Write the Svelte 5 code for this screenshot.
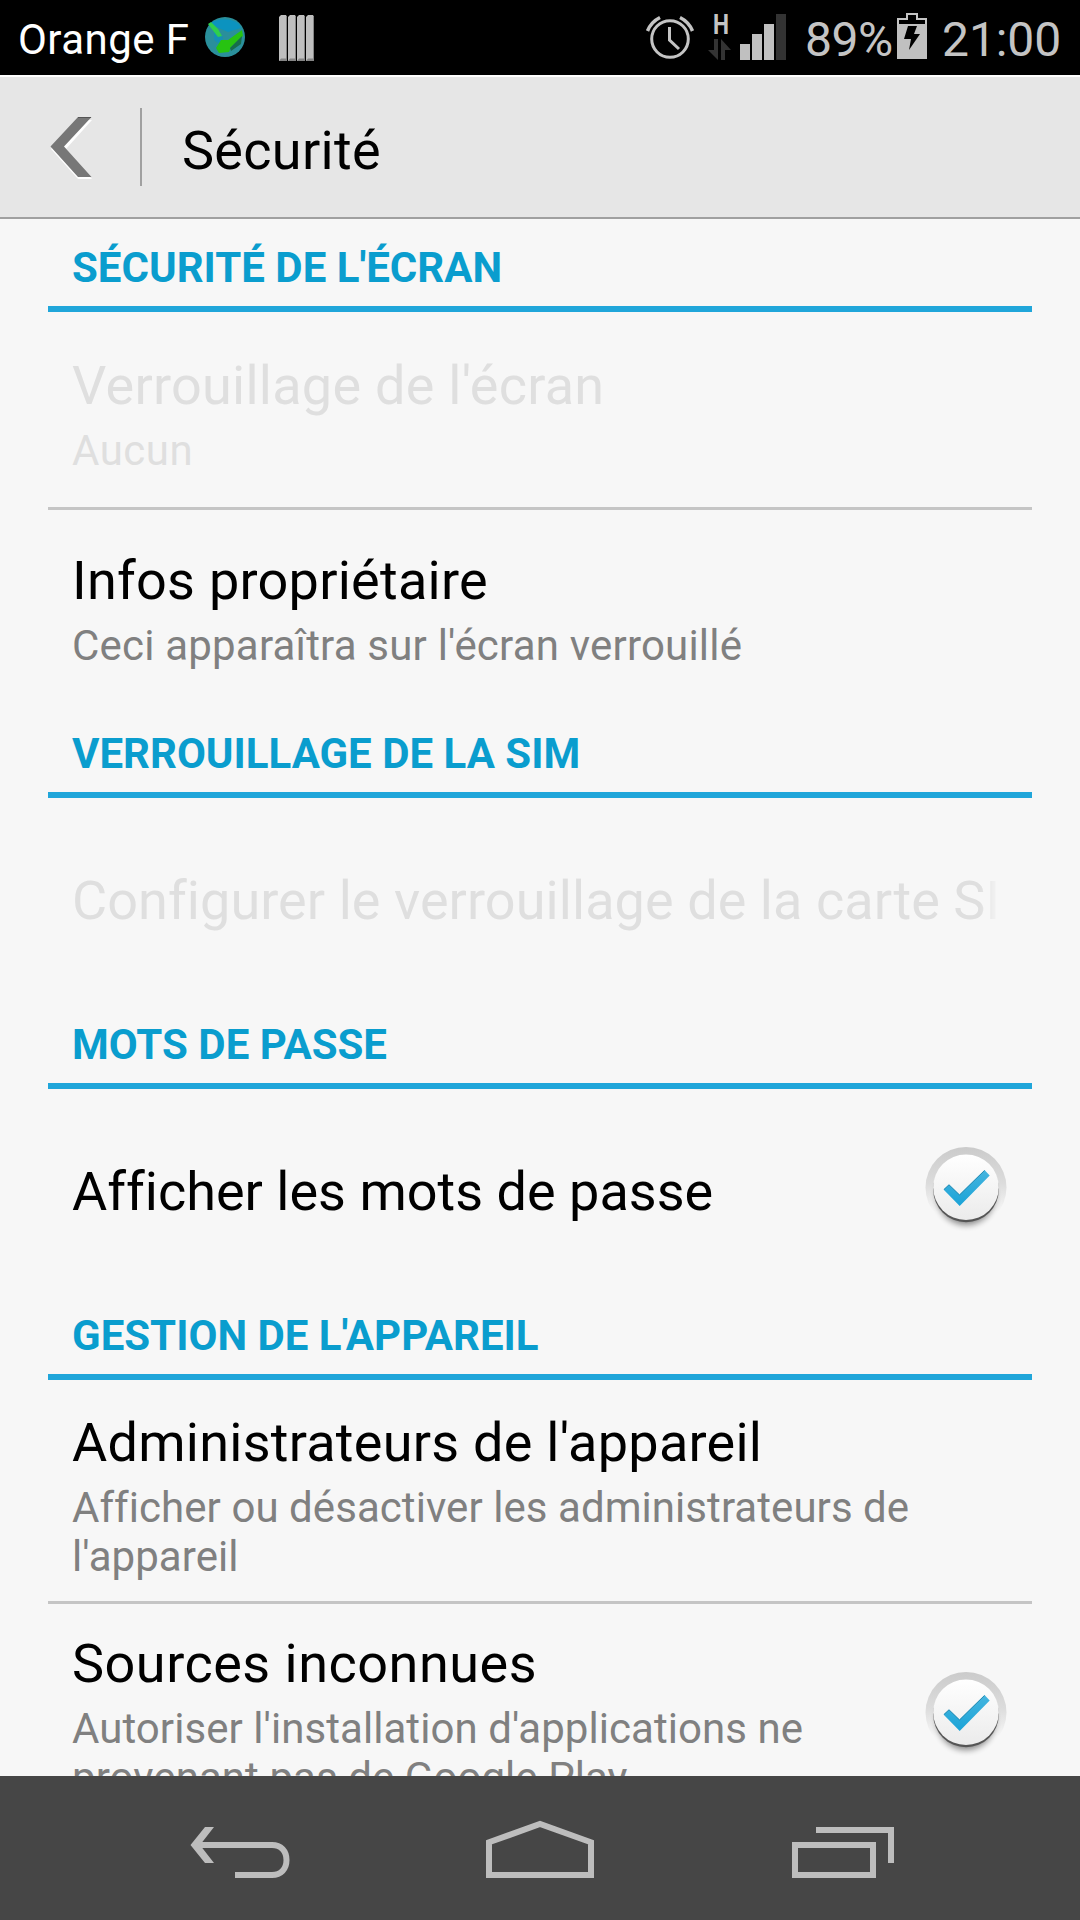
<script>
  let showPasswords = true;
  let unknownSources = true;

  function togglePasswords() {
    showPasswords = !showPasswords;
  }

  function toggleSources() {
    unknownSources = !unknownSources;
  }
</script>

<svelte:head>
  <title>Sécurité</title>
</svelte:head>

{#snippet check(checked)}
  <svg width="96" height="96" viewBox="0 0 96 96">
    <defs>
      <linearGradient id="ring" x1="0" y1="0" x2="0" y2="1">
        <stop offset="0" stop-color="#cbcbcb" />
        <stop offset="0.45" stop-color="#dcdcdc" />
        <stop offset="0.8" stop-color="#f7f7f7" />
      </linearGradient>
      <linearGradient id="knob" x1="0" y1="0" x2="0" y2="1">
        <stop offset="0" stop-color="#ffffff" />
        <stop offset="1" stop-color="#ebebeb" />
      </linearGradient>
      <linearGradient id="tick" x1="0" y1="0" x2="0" y2="1">
        <stop offset="0" stop-color="#45b5df" />
        <stop offset="1" stop-color="#1ba3d7" />
      </linearGradient>
      <filter id="soft" x="-30%" y="-30%" width="160%" height="160%">
        <feGaussianBlur stdDeviation="3" />
      </filter>
      <filter id="edge" x="-10%" y="-10%" width="120%" height="120%">
        <feGaussianBlur stdDeviation="0.7" />
      </filter>
    </defs>
    <circle cx="48" cy="48.500" r="40.500" fill="url(#ring)" />
    <circle cx="48" cy="57" r="29" fill="#000" opacity="0.45" filter="url(#soft)" />
    <circle cx="48" cy="50.500" r="32.800" fill="#555" filter="url(#edge)" />
    <circle cx="48" cy="48.300" r="32.800" fill="url(#knob)" />
    {#if checked}
      <path d="M25.500 50.500L31 45.500L41.500 55.500L66.500 31L71.700 36.500L41.700 67Z" fill="url(#tick)" />
      <path d="M26 50.500L31 45.800L41.500 56L66.500 31.500" fill="none" stroke="#2b8db4" stroke-width="1" />
    {/if}
  </svg>
{/snippet}

<div class="screen">
  <header class="status">
    <span class="carrier">Orange F</span>
    <svg class="globe" width="42" height="42" viewBox="0 0 42 42">
      <circle cx="21" cy="21" r="20" fill="#2a8f9b" />
      <path d="M7 7C14 2 28 2 35 8L37 12L24 16L10 10Z" fill="#0c93bf" />
      <path d="M10 14L19 21L18 30L10 24Z" fill="#1590b4" />
      <path d="M4 8L7 6L14 13L18 20L14 21Z" fill="#2fcf4c" />
      <path d="M38 14L39 20L34 25L27 31L25 36L15 37L12 32L17 24L24 24Z" fill="#27c311" />
      <path d="M38 20L31 27L26 32L27 35L37 28Z" fill="#176d4c" />
    </svg>
    <svg class="bars" width="36" height="46" viewBox="0 0 36 46">
      {#each [0, 9, 18, 27] as x}
        <path d="M{x} 46V2L{x + 2} 0H{x + 7}L{x + 8} 2V46Z" fill="#bfbfbf" />
        <path d="M{x + 8} 2V46H{x}L{x + 2} 43.5H{x + 7}V2Z" fill="#858585" />
      {/each}
    </svg>

    <svg class="alarm" width="50" height="50" viewBox="0 0 50 50" fill="none" stroke="#c4c4c4" stroke-width="3">
      <circle cx="25" cy="26" r="18.300" />
      <path d="M24.500 14V27L34 36" />
      <path d="M2.500 18Q6 9 15 4.500M47.500 18Q44 9 35 4.500" stroke-width="3.500" />
    </svg>
    <svg class="network" width="78" height="48" viewBox="0 0 78 48">
      <text x="4" y="21" textLength="16" lengthAdjust="spacingAndGlyphs">H</text>
      <path d="M5 26H9V47L-1 37H5Z" fill="#333" />
      <path d="M12 47V26L22 37H16V47Z" fill="#333" />
      <path d="M31 31H41V47H31ZM43 21H53V47H43ZM55 11H65V47H55Z" fill="#c0c0c0" />
      <path d="M67 1H77V47H67Z" fill="#333" />
    </svg>
    <span class="percent">89%</span>
    <svg class="battery" width="30" height="46" viewBox="0 0 30 46">
      <path d="M1 12V6H10V1H20V6H29V12" fill="none" stroke="#c4c4c4" stroke-width="2" />
      <path d="M0 11H30V46H0Z" fill="#c0c0c0" />
      <path d="M11 13H20L17 21H23L12 37L14 26H7Z" fill="#000" />
    </svg>
    <span class="clock">21:00</span>
  </header>

  <div class="action-bar">
    <button class="up" aria-label="Retour">
      <svg width="44" height="66" viewBox="0 0 44 66">
        <path d="M28 5H42L16 34L42 64H28L1 34Z" fill="#fff" />
        <path d="M28 2H41.500L14 31.500L41.500 62H28L0.500 31.500Z" fill="#777" />
        <path d="M28 2.500H41" stroke="#555" />
      </svg>
    </button>
    <h1>Sécurité</h1>
  </div>

  <main>
    <h2>Sécurité de l'écran</h2>
    <div class="row first disabled">
      <div class="text">
        <div class="title">Verrouillage de l'écran</div>
        <div class="summary">Aucun</div>
      </div>
    </div>
    <div class="row owner">
      <div class="text">
        <div class="title">Infos propriétaire</div>
        <div class="summary">Ceci apparaîtra sur l'écran verrouillé</div>
      </div>
    </div>

    <h2>Verrouillage de la SIM</h2>
    <div class="row single disabled">
      <div class="text fade">
        <div class="title">Configurer le verrouillage de la carte SIM</div>
      </div>
    </div>

    <h2>Mots de passe</h2>
    <div class="row single">
      <div class="text">
        <div class="title">Afficher les mots de passe</div>
      </div>
      <button class="check" aria-label="Afficher les mots de passe" on:click={togglePasswords}>
        {@render check(showPasswords)}
      </button>
    </div>

    <h2>Gestion de l'appareil</h2>
    <div class="row tall">
      <div class="text">
        <div class="title">Administrateurs de l'appareil</div>
        <div class="summary">Afficher ou désactiver les administrateurs de l'appareil</div>
      </div>
    </div>
    <div class="row tall last">
      <div class="text">
        <div class="title">Sources inconnues</div>
        <div class="summary">Autoriser l'installation d'applications ne provenant pas de Google Play</div>
      </div>
      <button class="check" aria-label="Sources inconnues" on:click={toggleSources}>
        {@render check(unknownSources)}
      </button>
    </div>
  </main>

  <nav>
    <svg width="100" height="60" viewBox="0 0 100 60" fill="none" stroke="#bdbdbd" stroke-width="6">
      <path d="M9 25H82C91 25 96.500 31 96.500 40S91 55 82 55H45" />
      <path d="M15 7H24L10 25L24 43H15L0.500 25Z" fill="#bdbdbd" stroke="none" />
    </svg>
    <svg class="home" width="108" height="60" viewBox="0 0 108 60" fill="none" stroke="#bdbdbd" stroke-width="6">
      <path d="M3 22.300L54 4L105 22.300V55H3Z" />
    </svg>
    <svg width="102" height="60" viewBox="0 0 102 60" fill="none" stroke="#bdbdbd" stroke-width="6">
      <path d="M3 25H81V55H3ZM24 10H99V43" />
    </svg>
  </nav>
</div>

<style>
  :global(body) {
    background: #f7f7f7;
  }

  .screen {
    display: flex;
    flex-direction: column;
    width: 1080px;
    height: 1920px;
    overflow: hidden;
    font-family: Roboto, sans-serif;
    color: #000;
    background: #f7f7f7;
  }

  svg {
    display: block;
    flex: none;
    overflow: visible;
  }

  button {
    padding: 0;
    border: 0;
    background: none;
    cursor: pointer;
  }

  .status {
    display: flex;
    flex: none;
    align-items: flex-start;
    height: 75px;
    background: #000;
    color: #c4c4c4;
    white-space: nowrap;
  }

  .carrier {
    width: 186px;
    margin: 15px 0 0 18px;
    font-size: 42px;
    line-height: 49px;
    letter-spacing: 0.45px;
    color: #fff;
  }

  .globe {
    margin-top: 16px;
  }

  .bars {
    margin: 15px 0 0 33px;
  }

  .alarm {
    margin: 13px 0 0 330px;
  }

  .network {
    margin: 13px 0 0 14px;
  }

  .network text {
    font-size: 28px;
    font-weight: 700;
    fill: #c4c4c4;
  }

  .percent,
  .clock {
    margin-top: 12px;
    font-size: 48px;
    line-height: 56px;
  }

  .percent {
    width: 92px;
    margin-left: 18px;
    letter-spacing: -0.5px;
  }

  .battery {
    margin-top: 13px;
  }

  .clock {
    margin-left: 15px;
    letter-spacing: -0.1px;
  }

  .action-bar {
    display: flex;
    flex: none;
    align-items: center;
    box-sizing: border-box;
    height: 144px;
    border-top: 2px solid #fff;
    border-bottom: 2px solid #a0a0a0;
    background: #e6e6e6;
  }

  .up {
    width: 142px;
    height: 78px;
    padding: 2px 0 0 50px;
    border-right: 2px solid #a0a0a0;
  }

  h1 {
    margin: 6px 0 0 40px;
    font-size: 54px;
    font-weight: 400;
    line-height: 63px;
    letter-spacing: 0.3px;
  }

  main {
    flex: 1;
    min-height: 0;
    padding: 0 48px;
    overflow: hidden;
  }

  h2 {
    box-sizing: border-box;
    height: 93px;
    margin: 0;
    padding: 24px 24px 0;
    border-bottom: 6px solid #20a6da;
    font-size: 42px;
    font-weight: 700;
    line-height: 49px;
    color: #0a9dce;
    text-transform: uppercase;
  }

  .row {
    display: flex;
    box-sizing: border-box;
    padding: 0 18px 0 24px;
  }

  .text {
    flex: 1;
    min-width: 0;
  }

  .title {
    font-size: 54px;
    line-height: 63px;
    letter-spacing: 0.26px;
    white-space: nowrap;
  }

  .summary {
    margin-top: 9px;
    font-size: 42px;
    line-height: 49px;
    letter-spacing: 0.06px;
    color: #808080;
  }

  .disabled .title,
  .disabled .summary {
    color: #dfdfdf;
  }

  .first {
    height: 198px;
    padding-top: 42px;
    border-bottom: 3px solid #c5c5c5;
  }

  .first .summary {
    letter-spacing: 0.5px;
  }

  .owner {
    height: 195px;
    padding-top: 39px;
  }

  .owner .summary {
    letter-spacing: 0.2px;
  }

  .single {
    height: 198px;
    padding-top: 71px;
  }

  .single .title {
    letter-spacing: 0.01px;
  }

  .single .check {
    margin-top: -21px;
  }

  .tall {
    height: 224px;
    padding-top: 31px;
    border-bottom: 3px solid #c5c5c5;
  }

  .last {
    padding-top: 28px;
    border-bottom: 0;
  }

  .last .title {
    letter-spacing: 0.5px;
  }

  .last .check {
    margin-top: 32px;
  }

  .check {
    width: 96px;
    height: 96px;
  }

  .fade {
    overflow: hidden;
    mask-image: linear-gradient(to right, #000 908px, transparent 928px);
  }

  .fade .title {
    letter-spacing: 0.07px;
  }

  nav {
    display: flex;
    flex: none;
    box-sizing: border-box;
    height: 144px;
    padding: 44px 0 0 190px;
    background: #464646;
  }

  .home {
    margin: 0 198px 0 196px;
  }
</style>
